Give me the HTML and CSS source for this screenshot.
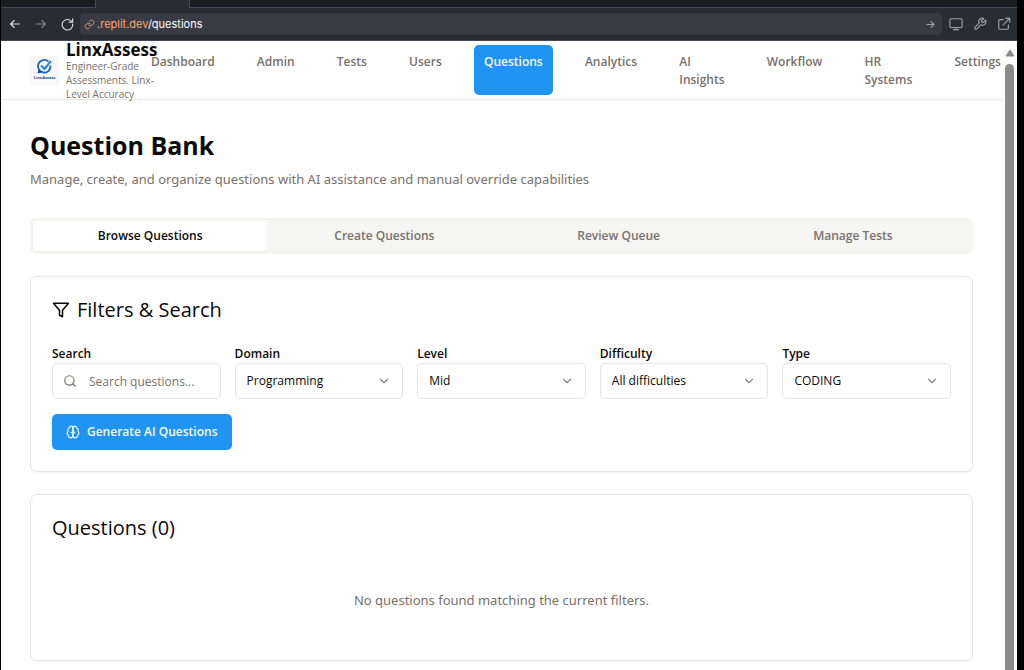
FILE: index.html
```html
<!DOCTYPE html>
<html lang="en">
<head>
<meta charset="utf-8">
<meta name="viewport" content="width=device-width, initial-scale=1">
<title>Question Bank</title>
<link rel="stylesheet" href="styles.css">
</head>
<body>
<div class="window">
  <div class="tabstrip"><span class="tabstrip-tab"></span></div>
  <div class="toolbar">
    <button class="tool" type="button" aria-label="Back"><svg class="icon" viewBox="0 0 16 16"><path d="M13 8H3M7 4L3 8l4 4"/></svg></button>
    <button class="tool tool-dim" type="button" aria-label="Forward"><svg class="icon" viewBox="0 0 16 16"><path d="M3 8h10M9 4l4 4-4 4"/></svg></button>
    <button class="tool" type="button" aria-label="Reload"><svg class="icon" viewBox="0 0 16 16"><path d="M13.200 5.200A6 6 0 1 0 14.400 8M14.500 2v4h-4"/></svg></button>
    <div class="address">
      <svg class="icon address-link" viewBox="0 0 24 24"><path d="M10 13a5 5 0 0 0 7.500.5l3-3a5 5 0 0 0-7-7l-1.700 1.700M14 11a5 5 0 0 0-7.500-.5l-3 3a5 5 0 0 0 7 7l1.700-1.700"/></svg>
      <span class="address-text"><span class="address-host">.replit.dev</span>/questions</span>
      <svg class="icon address-go" viewBox="0 0 16 16"><path d="M2 8h12M9 3l5 5-5 5"/></svg>
    </div>
    <div class="tools">
      <button class="tool tool-gray" type="button" aria-label="Devices"><svg class="icon" viewBox="0 0 16 16"><rect x="1" y="2" width="14" height="10" rx="1.500"/><path d="M8 12v2.500M5 14.500h6"/></svg></button>
      <button class="tool tool-gray" type="button" aria-label="Developer tools"><svg class="icon tool-wrench" viewBox="0 0 24 24"><path d="M14.700 6.300a1 1 0 0 0 0 1.400l1.600 1.600a1 1 0 0 0 1.400 0l3.770-3.770a6 6 0 0 1-7.940 7.940l-6.910 6.910a2.120 2.120 0 0 1-3-3l6.910-6.910a6 6 0 0 1 7.940-7.940l-3.760 3.760z"/></svg></button>
      <button class="tool tool-gray" type="button" aria-label="Open in new tab"><svg class="icon" viewBox="0 0 16 16"><path d="M7 3H3.500A1.500 1.500 0 0 0 2 4.500v8A1.500 1.500 0 0 0 3.500 14h8a1.500 1.500 0 0 0 1.500-1.500V9M10 1.500H14.500v4.500M14.500 1.500L7 9"/></svg></button>
    </div>
  </div>

  <div class="viewport">
    <div class="page">
      <header class="header">
        <div class="brand">
          <svg class="brand-logo" viewBox="0 0 29 29" aria-hidden="true">
            <rect width="29" height="29" fill="#f8f8f8"/>
            <path d="M18.500 5.600A6.300 6.300 0 1 0 20.500 9.500" fill="none" stroke="#1b62bd" stroke-width="1.800"/>
            <path d="M8.500 13.500L7.500 17.500l6-1.500" fill="#164fa0"/>
            <path d="M11 9.500l3.500 3.500L21 5" fill="none" stroke="#1d86e0" stroke-width="2"/>
            <text class="brand-logo-text" x="14.500" y="23" text-anchor="middle">LinxAssess</text>
          </svg>
          <div class="brand-copy">
            <div class="brand-name">LinxAssess</div>
            <div class="brand-tag">Engineer-Grade Assessments. Linx-Level Accuracy</div>
          </div>
        </div>
        <nav class="nav">
          <a class="nav-link" href="#">Dashboard</a>
          <a class="nav-link" href="#">Admin</a>
          <a class="nav-link" href="#">Tests</a>
          <a class="nav-link" href="#">Users</a>
          <a class="nav-link nav-active" href="#" aria-current="page">Questions</a>
          <a class="nav-link" href="#">Analytics</a>
          <a class="nav-link" href="#">AI<br>Insights</a>
          <a class="nav-link" href="#">Workflow</a>
          <a class="nav-link" href="#">HR<br>Systems</a>
          <a class="nav-link" href="#">Settings</a>
        </nav>
      </header>

      <main class="main">
        <div class="intro">
          <h1 class="title">Question Bank</h1>
          <p class="subtitle">Manage, create, and organize questions with AI assistance and manual override capabilities</p>
        </div>

        <div class="tabs" role="tablist">
          <button class="tab tab-active" type="button" role="tab" aria-selected="true">Browse Questions</button>
          <button class="tab" type="button" role="tab" aria-selected="false">Create Questions</button>
          <button class="tab" type="button" role="tab" aria-selected="false">Review Queue</button>
          <button class="tab" type="button" role="tab" aria-selected="false">Manage Tests</button>
        </div>

        <section class="card">
          <h2 class="card-title"><svg class="icon title-icon" viewBox="0 0 24 24"><path d="M22 3H2l8 9.460V19l4 2v-8.540L22 3z"/></svg>Filters &amp; Search</h2>
          <div class="filters">
            <div class="field">
              <label class="label" for="search">Search</label>
              <div class="control">
                <svg class="icon search-icon" viewBox="0 0 24 24"><circle cx="11" cy="11" r="8"/><path d="M21 21l-4.300-4.300"/></svg>
                <input class="input input-search" id="search" type="text" placeholder="Search questions...">
              </div>
            </div>
            <div class="field">
              <label class="label" for="domain">Domain</label>
              <div class="control">
                <select class="input" id="domain"><option>Programming</option></select>
                <svg class="icon chevron" viewBox="0 0 24 24"><path d="M6 9l6 6 6-6"/></svg>
              </div>
            </div>
            <div class="field">
              <label class="label" for="level">Level</label>
              <div class="control">
                <select class="input" id="level"><option>Mid</option></select>
                <svg class="icon chevron" viewBox="0 0 24 24"><path d="M6 9l6 6 6-6"/></svg>
              </div>
            </div>
            <div class="field">
              <label class="label" for="difficulty">Difficulty</label>
              <div class="control">
                <select class="input" id="difficulty"><option>All difficulties</option></select>
                <svg class="icon chevron" viewBox="0 0 24 24"><path d="M6 9l6 6 6-6"/></svg>
              </div>
            </div>
            <div class="field">
              <label class="label" for="type">Type</label>
              <div class="control">
                <select class="input" id="type"><option>CODING</option></select>
                <svg class="icon chevron" viewBox="0 0 24 24"><path d="M6 9l6 6 6-6"/></svg>
              </div>
            </div>
          </div>
          <button class="generate" type="button">
            <svg class="icon" viewBox="0 0 24 24"><path d="M12 5a3 3 0 1 0-5.997.125 4 4 0 0 0-2.526 5.770 4 4 0 0 0 .556 6.588A4 4 0 1 0 12 18Z"/><path d="M12 5a3 3 0 1 1 5.997.125 4 4 0 0 1 2.526 5.770 4 4 0 0 1-.556 6.588A4 4 0 1 1 12 18Z"/><path d="M15 13a4.500 4.500 0 0 1-3-4 4.500 4.500 0 0 1-3 4"/></svg>
            Generate AI Questions
          </button>
        </section>

        <section class="card">
          <h2 class="card-title">Questions (0)</h2>
          <p class="empty">No questions found matching the current filters.</p>
        </section>
      </main>
    </div>
    <div class="scrollbar" aria-hidden="true">
      <svg class="scroll-arrow" viewBox="0 0 10 8"><path d="M5 1L9 7H1z"/></svg>
      <div class="scroll-thumb"></div>
    </div>
  </div>
</div>
</body>
</html>
```
FILE: styles.css
```css
* { box-sizing: border-box; }

body {
  margin: 0;
  background: #000;
  color: #0c0a09;
  font: 13px/18px "Open Sans", "Noto Sans", sans-serif;
}

button, input, select { font: inherit; color: inherit; }
h1, h2, p { margin: 0; }

.icon {
  width: 14px;
  height: 14px;
  flex: none;
  fill: none;
  stroke: currentColor;
  stroke-width: 2;
  stroke-linecap: round;
  stroke-linejoin: round;
}

.window {
  display: flex;
  flex-direction: column;
  height: 100vh;
  margin: 0 7px 0 1px;
  overflow: hidden;
}

/* Browser chrome */
.tabstrip {
  height: 8px;
  flex: none;
  padding-left: 94px;
  background: #1b1c20;
  border-bottom: 1px solid #454857;
}
.tabstrip-tab {
  display: block;
  width: 95px;
  height: 8px;
  background: #2a2c34;
  border: solid #454857;
  border-width: 0 1px;
}
.toolbar {
  display: flex;
  align-items: center;
  flex: none;
  height: 33px;
  padding: 0 5px;
  gap: 9px;
  background: #2a2c34;
  border-bottom: 1px solid #454857;
}
.tool {
  display: flex;
  align-items: center;
  justify-content: center;
  width: 17px;
  height: 24px;
  padding: 0;
  border: 0;
  background: none;
  color: #dcdde0;
}
.tool .icon { stroke-width: 1.3; }
.tool-dim { color: #85878d; }
.tool-gray { color: #9da0a6; }
.tool .tool-wrench { stroke-width: 2; }
.address {
  display: flex;
  align-items: center;
  flex: 1;
  height: 22px;
  padding: 0 7px 0 4px;
  gap: 2px;
  margin: 0 -4px;
  border-radius: 4px;
  background: #383b44;
}
.address-link { width: 11px; height: 11px; color: #d39a66; }
.address-text { flex: 1; font: 11px/18px Inter, sans-serif; color: #fff; }
.address-host { color: #ffa66b; }
.address-go { width: 9px; height: 9px; color: #9da0a6; }
.tools { display: flex; gap: 7px; }

/* Page area */
.viewport { display: flex; flex: 1; min-height: 0; background: #fff; }
.page { flex: 1; min-width: 0; overflow: hidden; }
.scrollbar {
  display: flex;
  flex-direction: column;
  align-items: center;
  width: 15px;
  gap: 7px;
  padding-top: 8px;
  background: #fcfcfc;
}
.scroll-arrow { width: 10px; height: 8px; flex: none; fill: #8b8b8b; stroke: #8b8b8b; stroke-linejoin: round; }
.scroll-thumb { width: 9px; flex: 1; border-radius: 5px 5px 0 0; background: #8b8b8b; }

.header {
  display: flex;
  height: 59px;
  border-bottom: 1px solid #e5e5e5;
  padding-left: 29px;
}
.brand { display: flex; align-items: center; width: 111px; gap: 7px; flex: none; }
.brand-logo { width: 29px; height: 29px; flex: none; }
.brand-logo-text { font: bold 4px "Open Sans", sans-serif; fill: #2b4a80; }
.brand-copy { width: 90px; flex: none; align-self: flex-start; }
.brand-name { font-size: 17px; line-height: 18px; font-weight: 700; }
.brand-tag { width: 94px; font-size: 10px; line-height: 14px; color: #78716c; }
.nav {
  display: flex;
  flex: 1;
  justify-content: space-between;
  padding: 4px 0;
  margin-right: -9px;
}
.nav-link {
  padding: 8px 10px;
  border-radius: 5px;
  color: #78716c;
  font-size: 12px;
  font-weight: 600;
  text-decoration: none;
}
.nav-active { background: #2094f3; color: #f8fafc; }

.main { display: flex; flex-direction: column; gap: 22px; padding: 29px; }
.intro { display: flex; flex-direction: column; gap: 7px; padding-bottom: 6px; }
.title { font-size: 25px; line-height: 32px; font-weight: 700; }
.subtitle { font-family: "Noto Sans", sans-serif; font-size: 13px; line-height: 22px; color: #78716c; }

.tabs {
  display: grid;
  grid-template-columns: repeat(4, 1fr);
  height: 36px;
  padding: 3px;
  border-radius: 5px;
  background: #f5f5f4;
}
.tab {
  padding: 0;
  border: 0;
  border-radius: 4px;
  background: none;
  color: #78716c;
  font-size: 12px;
  font-weight: 600;
}
.tab-active { background: #fff; color: #0c0a09; box-shadow: 0 1px 2px #0000000d; }

.card {
  padding: 21px;
  border: 1px solid #e5e5e5;
  border-radius: 7px;
  box-shadow: 0 1px 2px #0000000d;
}
.card-title {
  display: flex;
  align-items: center;
  gap: 7px;
  padding-bottom: 23px;
  font-size: 20px;
  line-height: 24px;
  font-weight: 500;
}
.title-icon { width: 18px; height: 18px; }

.filters { display: grid; grid-template-columns: repeat(5, 1fr); gap: 14px; }
.field { display: flex; flex-direction: column; }
.label { font-size: 12px; font-weight: 600; }
.control { position: relative; }
.input {
  display: block;
  width: 100%;
  height: 36px;
  padding: 0 11px;
  border: 1px solid #e5e5e5;
  border-radius: 5px;
  background: #fff;
  font-size: 12px;
  appearance: none;
}
.input-search { padding-left: 36px; }
.input::placeholder { color: #78716c; opacity: 1; }
.search-icon { position: absolute; left: 11px; top: 11px; color: #78716c; }
.chevron { position: absolute; right: 12px; top: 11px; color: #858585; pointer-events: none; }

.generate {
  display: flex;
  align-items: center;
  gap: 7px;
  height: 36px;
  margin-top: 15px;
  padding: 0 14px;
  border: 0;
  border-radius: 5px;
  background: #2094f3;
  color: #f8fafc;
  font-size: 12px;
  font-weight: 600;
}
.empty { padding: 26px 0 28px; text-align: center; font-family: "Noto Sans", sans-serif; font-size: 13px; line-height: 22px; color: #78716c; }
```
